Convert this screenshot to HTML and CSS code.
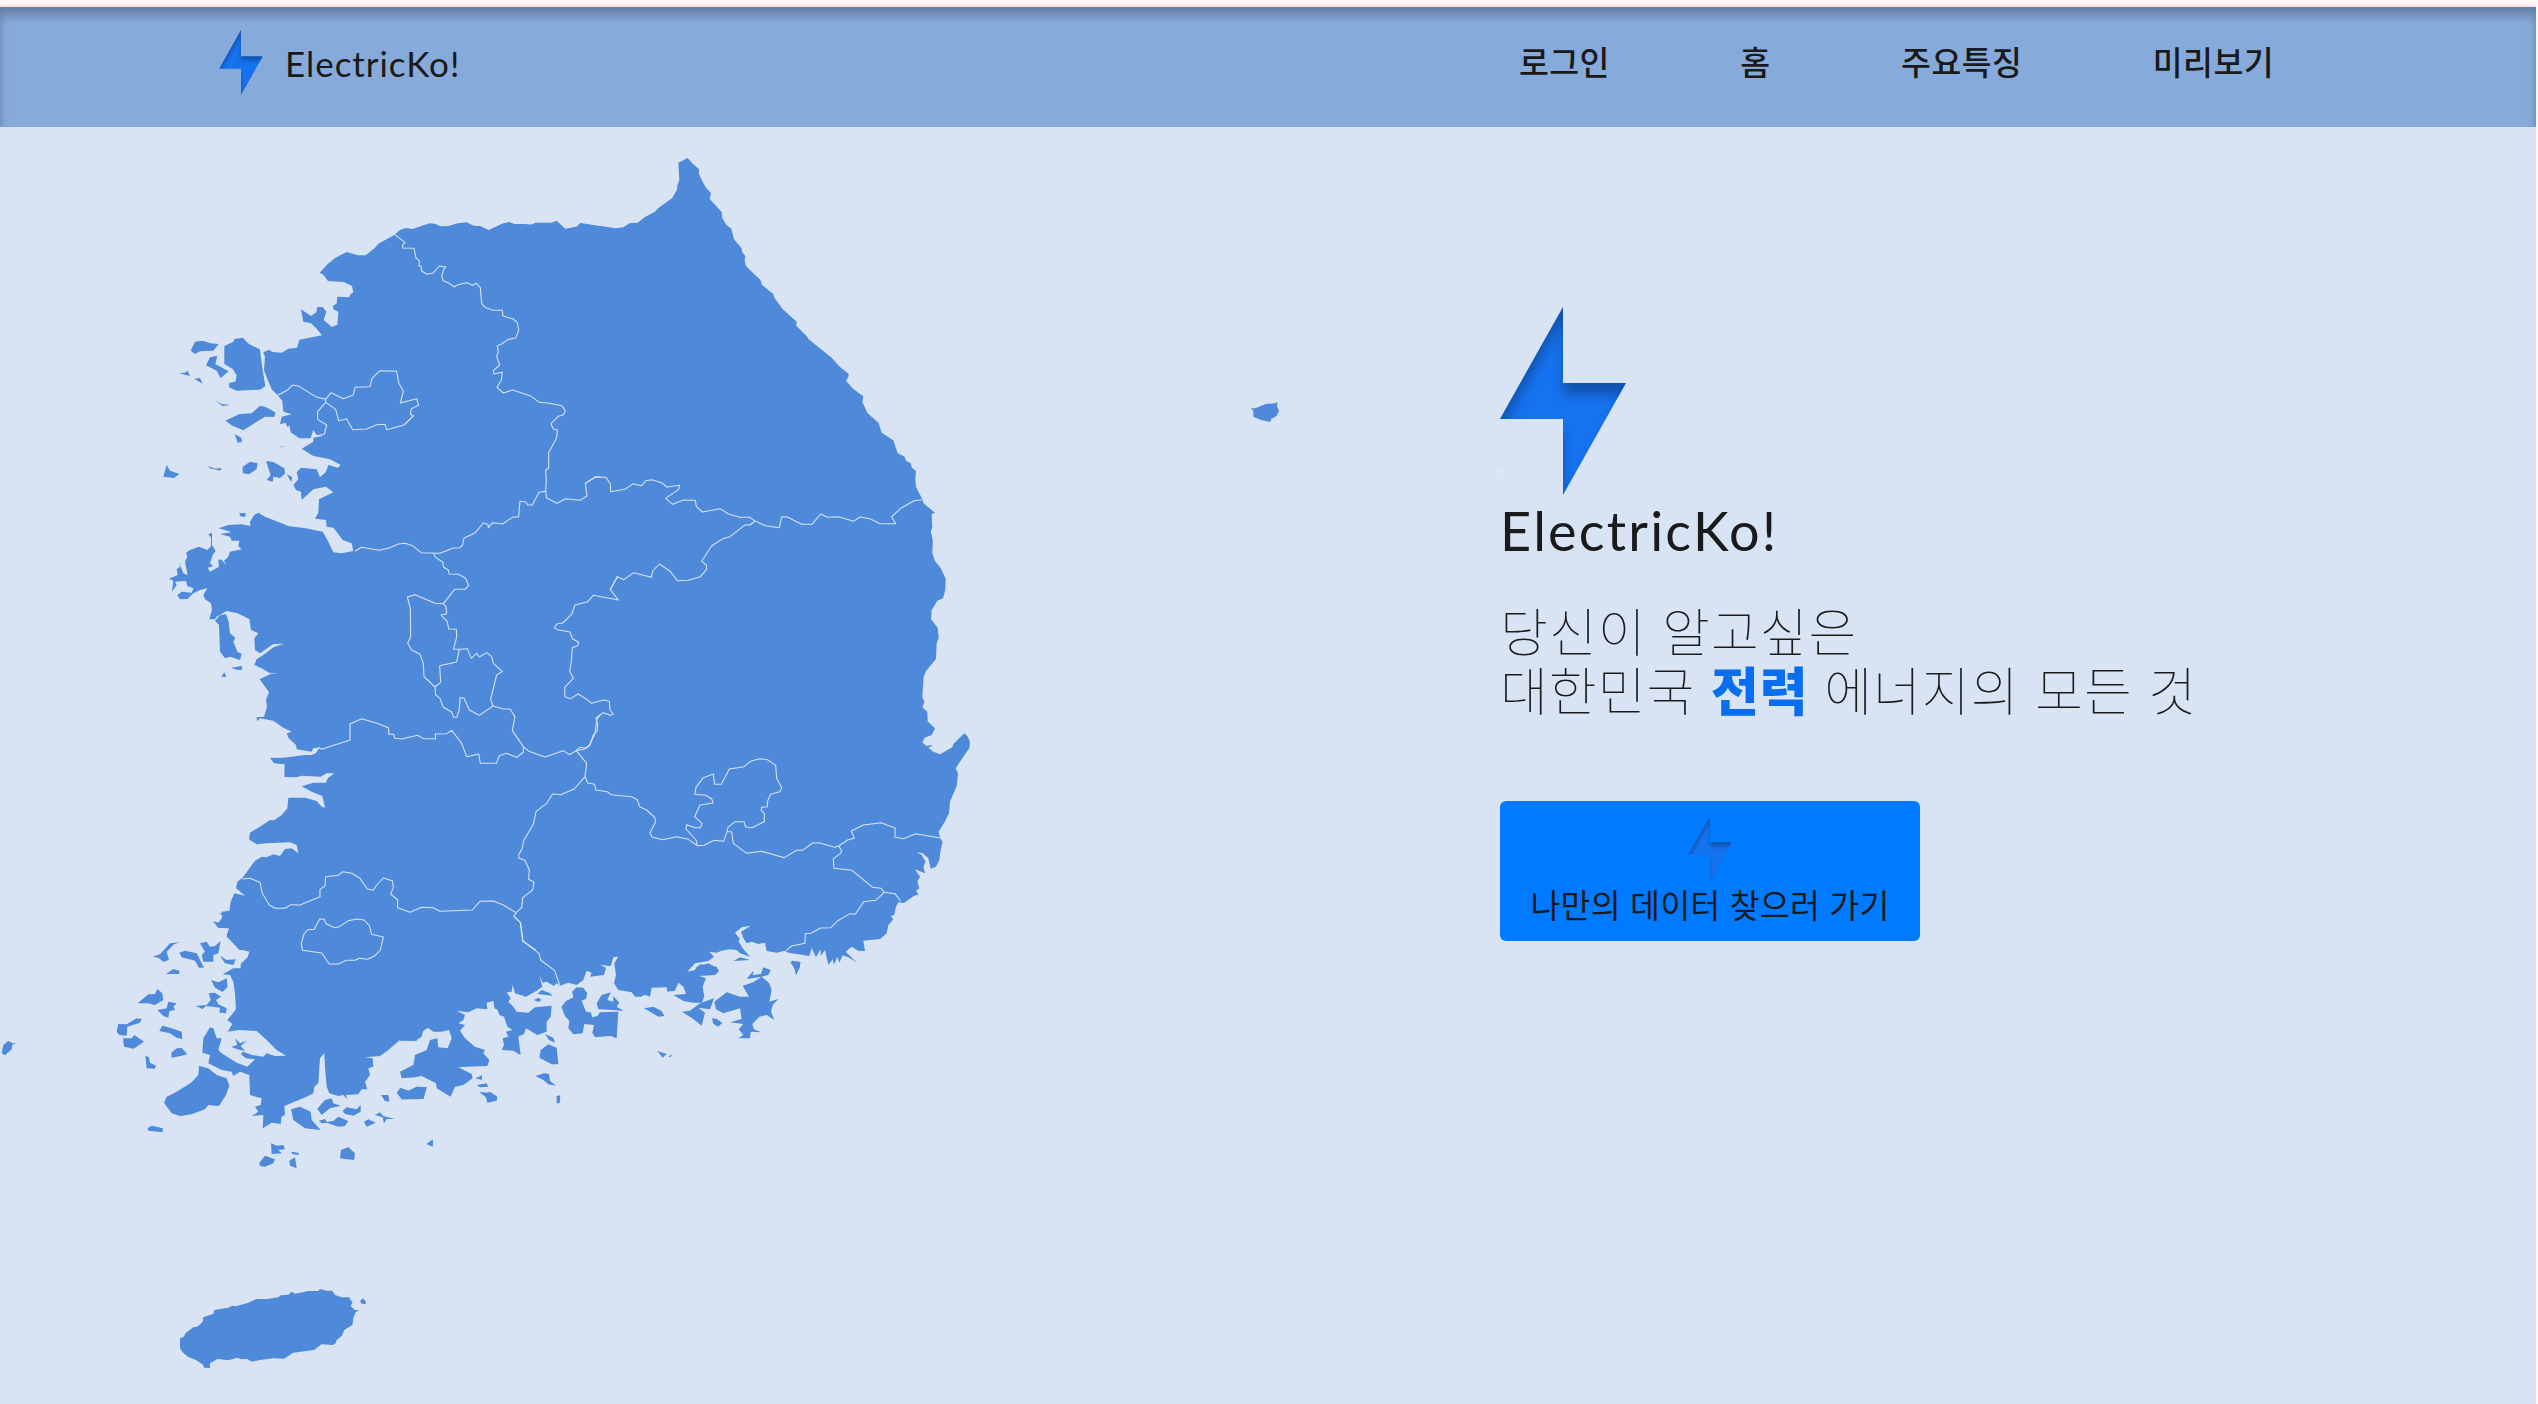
FILE: index.html
```html
<!DOCTYPE html>
<html lang="ko">
<head>
<meta charset="utf-8">
<title>ElectricKo!</title>
<link rel="stylesheet" href="styles.css">
</head>
<body>
<svg class="defs" width="0" height="0" aria-hidden="true">
  <defs>
    <filter id="inner" x="-10%" y="-10%" width="120%" height="120%" color-interpolation-filters="sRGB">
      <feOffset in="SourceAlpha" dx="0" dy="12" result="o"/>
      <feGaussianBlur in="o" stdDeviation="6" result="b"/>
      <feComposite in="SourceAlpha" in2="b" operator="out" result="s"/>
      <feFlood flood-color="#000" flood-opacity=".27"/>
      <feComposite in2="s" operator="in" result="shade"/>
      <feMerge><feMergeNode in="SourceGraphic"/><feMergeNode in="shade"/></feMerge>
    </filter>
    <symbol id="bolt" viewBox="0 0 126 188">
      <path d="M63 0V76H126L63 188V112H0Z" fill="#1673f0" filter="url(#inner)"/>
    </symbol>
  </defs>
</svg>
<header class="header">
  <a class="brand"><svg class="bolt-small"><use href="#bolt"/></svg><span class="brand-name">ElectricKo!</span></a>
  <nav class="nav"><a>로그인</a><a>홈</a><a>주요특징</a><a>미리보기</a></nav>
</header>
<main class="hero">
  <svg class="map" viewBox="0 127 1300 1277">
    <g class="land">
      <g transform="translate(100 140) scale(.33333)">
        <path d="M1500 258 1441 249 1430 260 1396 267 1370 243 1357 249 1307 248 1295 254 1274 252 1243 252 1229 247 1210 250 1166 270 1140 258 1121 257 1100 247 1073 250 1045 258 1021 259 1005 251 988 250 938 267 917 264 900 270 884 284 835 311 825 323 797 346 774 346 740 336 705 354 680 375 659 398 670 404 684 423 731 426 756 438 760 457 751 463 748 472 712 470 710 491 699 497 700 508 715 515 712 554 695 561 671 540 679 515 668 501 652 501 649 517 633 528 603 508 610 545 633 550 650 566 666 586 598 599 591 623 565 626 545 638 517 636 507 629 490 637 495 650 492 690 500 712 515 748 533 766 547 783 550 815 575 823 545 830 540 853 556 848 563 862 568 855 572 877 598 895 632 895 640 870 650 885 670 888 640 893 640 905 605 926 640 948 690 958 722 975 714 983 685 975 678 995 660 1012 650 988 603 983 590 997 595 1017 580 1035 588 1050 603 1055 605 1080 640 1048 678 1040 700 1057 657 1078 655 1118 645 1136 678 1140 680 1160 700 1163 715 1182 728 1200 755 1210 760 1234 760 1300H1500Z"/>
        <path d="M272 632 285 605 308 602 332 610 356 612 340 632 300 634 285 642ZM318 676 330 652 352 647 346 672 386 694 362 714 350 692ZM373 618 400 605 404 597 428 593 447 612 480 628 483 655 488 690 496 738 480 749 410 752 387 742 388 728 406 725 410 706 398 687 373 672ZM237 699 255 698 262 692 270 707 260 706ZM282 716 300 714 308 731ZM343 779 365 792 391 795 368 798ZM376 842 418 822 455 820 480 797 500 802 527 818 522 831 495 830 430 871 405 860 397 857ZM404 882 424 893 426 906 413 908ZM190 1010 200 975 210 992 238 1002 222 1014ZM323 978 346 986 365 984 360 992 330 985ZM428 980 450 965 473 970 470 987 447 1003 428 1000ZM498 963 520 966 553 985 556 1000 540 1014 520 1010 518 1025 500 1020 512 1006ZM560 1003 577 1012 574 1026ZM418 1120 437 1120 435 1130 422 1129ZM540 920 553 918 545 925Z"/>
      </g>
      <g transform="translate(500 140) scale(.33333)">
        <path d="M0 254 28 247 45 254 95 254 107 249 152 248 170 243 196 267 230 260 241 250 285 259 303 258 347 265 370 262 390 249 413 248 435 231 465 215 475 204 516 175 531 149 532 135 538 120 535 68 563 54 576 69 597 88 597 101 605 120 617 142 633 160 629 177 665 216 667 235 679 254 694 266 702 298 725 325 726 335 736 348 734 362 738 378 755 395 781 419 786 435 820 462 823 473 848 507 860 518 890 545 889 557 922 590 925 597 995 653 1020 681 1046 701 1045 711 1038 722 1060 747 1090 769 1087 787 1103 820 1136 849 1145 878 1180 901 1193 940 1214 950 1218 962 1232 970 1236 983 1248 993 1244 1040 1267 1077 1270 1090 1303 1118 1294 1122 1297 1160 1292 1175 1297 1200 1296 1240 1303 1262 1322 1285 1336 1318 1332 1350H0Z"/>
      </g>
      <g transform="translate(150 500) scale(.33333)">
        <path d="M610 153 575 160 550 157 535 125 518 95 463 84 418 79 385 66 345 50 325 38 313 45 300 65 301 78 275 73 235 75 206 85 225 90 245 97 210 102 240 110 245 122 268 122 265 138 275 148 240 155 235 170 222 182 228 195 213 178 205 180 207 200 180 215 173 203 190 198 180 190 188 165 197 152 186 135 186 98 175 103 183 112 183 138 172 150 147 140 120 150 108 158 112 170 105 185 113 225 100 220 86 185 90 200 80 208 83 225 57 236 70 242 66 275 80 255 75 245 108 243 112 258 130 265 125 278 95 275 82 285 90 298 112 297 130 280 150 270 172 265 160 285 165 298 183 310 186 330 178 358 195 358 200 350 230 333 262 340 298 357 303 390 325 400 313 415 315 450 330 460 370 432 402 431 370 442 340 465 320 478 313 495 335 505 360 520 383 521 360 523 329 538 357 577 348 600 351 620 342 650 320 652 321 664 330 655 370 662 400 683 425 695 410 700 416 715 438 735 440 748 485 755 490 744 508 743 497 760 485 765 465 765 400 773 360 774 372 790 404 793 403 831 440 832 455 827 512 830 530 820 553 820 533 835 528 848 490 848 455 859 485 875 517 888 525 923 515 920 500 903 465 893 415 893 412 925 395 945 372 961 360 960 330 980 300 998 297 1018 320 1033 350 1030 420 1027 440 1035 445 1060 425 1045 405 1047 390 1068 370 1063 350 1072 335 1070 315 1082 277 1134 262 1145 258 1165 285 1187 253 1180 242 1205 238 1235 210 1240 218 1250 208 1268 190 1265 205 1283 238 1285 230 1305 268 1350H1350V100H700Z"/>
        <path d="M195 362 210 346 228 342 236 365 240 400 256 413 250 425 262 455 275 462 270 480 240 470 225 475 210 455 207 375ZM268 38 286 41 285 50 272 48ZM244 503 275 498 277 509 262 510ZM214 530 223 517 229 531Z"/>
      </g>
      <g transform="translate(550 480) scale(.33333)">
        <path d="M1096 0 1098 20 1115 55 1120 70 1155 98 1144 102 1146 140 1142 155 1148 180 1147 220 1155 243 1172 265 1187 297 1186 330 1179 355 1162 362 1145 390 1143 418 1163 443 1166 475 1160 490 1158 537 1128 573 1121 592 1117 650 1123 665 1117 682 1132 695 1133 724 1155 745 1145 765 1124 773 1117 787 1128 797 1150 795 1135 803 1150 815 1170 823 1207 802 1210 792 1243 760 1252 768 1260 785 1258 805 1240 830 1217 865 1224 880 1221 915 1200 965 1197 1000 1186 1022 1166 1055 1170 1072 1178 1085 1172 1110 1168 1140 1158 1160 1142 1166 1135 1135 1118 1120 1100 1117 1115 1125 1127 1145 1120 1160 1125 1180 1095 1168 1110 1190 1102 1205 1108 1225 1098 1232 1106 1244 1092 1247 1062 1269 1045 1267 1037 1283 1033 1305 1022 1308 1030 1318 1015 1335 1010 1360 990 1377 940 1382 945 1413 925 1412 905 1400 887 1415 920 1447 895 1432 878 1426 868 1448 862 1430 852 1454 848 1438 835 1455 825 1410 812 1428 812 1408 798 1432 785 1404 778 1428 745 1423 715 1418 705 1412 680 1418 650 1413 645 1388 625 1392 605 1385 590 1390 580 1375 573 1355 603 1337 575 1342 555 1358 570 1378 565 1383 578 1405 600 1430 570 1420 560 1410 540 1408 515 1412 500 1418 478 1415 492 1430 475 1443 435 1450 412 1475 0 1340V0Z"/>
        <path d="M720 1445 752 1447 748 1463 738 1485 733 1465ZM550 1443 570 1432 600 1440Z"/>
      </g>
      <g transform="translate(400 820) scale(.33333)">
        <path d="M0 0H1000V340L870 430 862 455 885 450 890 440 925 430 945 440 958 452 945 465 898 468 918 475 908 500 913 530 905 548 880 548 850 543 820 525 858 522 850 500 835 488 825 512 802 515 800 502 755 503 750 530 735 524 722 530 705 530 695 517 655 510 642 490 648 465 643 430 655 410 640 412 632 438 600 435 618 443 612 465 570 470 575 458 560 452 550 480 530 495 505 488 480 497 470 490 462 498 440 485 428 488 418 465 427 500 410 512 378 530 345 520 338 495 335 515 320 517 332 535 325 545 340 560 350 575 385 578 405 562 455 557 452 590 440 605 440 635 412 645 378 625 372 642 355 650 362 705 340 692 305 690 312 675 308 655 325 650 318 635 337 630 322 620 312 590 298 585 293 570 283 565 280 543 260 548 262 568 230 565 205 577 170 572 195 585 190 600 175 610 195 615 180 632 195 655 225 680 255 690 250 700 268 720 262 738 200 740 175 742 215 762 218 775 190 795 165 800 152 830 110 805 108 790 65 768 45 772 5 775 0 755 40 735 45 705 80 690 90 660 112 655 115 682 143 685 155 655 147 630 125 635 100 635 82 622 65 638 50 662 0 662Z"/>
        <path d="M484 560 498 543 520 532 516 515 530 502 550 503 562 520 558 537 545 542 558 575 572 577 577 592 592 588 600 577 655 575 652 620 650 655 632 648 585 652 577 638 582 615 553 612 548 640 520 643 505 625 508 603 495 588ZM590 550 605 525 632 517 622 540 640 545 640 528 658 548 650 560 672 573 640 570 595 568ZM402 540 415 533 425 540 415 546ZM412 522 425 510 450 520 458 527ZM418 713 422 690 445 673 470 683 473 712 475 733 455 733ZM435 642 460 653 465 668 447 660ZM406 768 432 760 447 762 450 782 468 797 445 793 430 780ZM470 850 470 828 481 826 479 850ZM230 795 260 790 265 800 240 802ZM226 775 247 766 245 780ZM237 815 262 818 270 815 292 830 290 842 262 848 258 832ZM772 693 800 702 788 713ZM806 710 815 702 813 711ZM732 565 760 560 785 573 793 588 775 590 758 580ZM846 575 870 572 900 550 942 535 930 568 895 563 915 578 905 617 880 597ZM936 595 950 597 967 608 955 620 940 612ZM943 545 980 517 1020 530 1047 530 1028 497 1060 487 1085 470 1108 490 1115 510 1108 545 1135 537 1118 555 1113 575 1123 600 1100 585 1078 590 1057 612 1062 628 1083 637 1052 635 1050 655 1015 655 1030 645 1016 628 1030 612 990 607 1025 597 1020 565 970 580 948 568ZM1060 465 1083 462 1090 442 1112 450 1105 465 1085 470 1055 475ZM1040 477 1060 452 1058 475ZM1175 422 1200 425 1200 440 1188 465 1185 448ZM0 803 25 812 50 800 80 802 70 837 5 838ZM80 972 98 958 98 978ZM885 450 900 433 950 440 955 455 935 465 890 460Z"/>
      </g>
      <g transform="translate(0 820) scale(.33333)">
        <path d="M950 0V200L760 250 690 272 665 275 668 290 655 310 640 303 655 323 688 325 680 350 718 388 748 395 743 412 722 432 722 445 700 445 668 463 690 465 700 485 705 520 708 568 682 600 697 612 683 635 715 630 770 633 800 660 830 690 858 707 825 708 800 700 790 710 755 705 730 695 722 702 738 715 765 718 742 740 710 728 665 700 655 690 665 655 650 655 640 625 630 622 610 655 607 698 630 705 625 730 665 750 695 755 700 768 720 755 748 765 750 825 785 835 782 855 765 860 775 875 755 888 790 885 788 925 815 908 842 912 845 890 855 885 853 858 920 830 940 820 943 800 955 790 960 715 973 700 975 740 980 800 988 820 1015 828 1030 825 1042 838 1038 825 1075 823 1085 808 1102 808 1095 785 1110 765 1105 745 1120 740 1118 715 1095 712 1140 708 1165 690 1200 660 1245 662 1265 650 1270 630 1290 622 1350 500V0Z"/>
        <path d="M458 410 480 403 510 370 540 367 522 373 500 395 507 420 490 425 475 413ZM538 398 555 392 590 400 612 443 597 443 585 422 545 412ZM600 370 620 365 630 380 645 378 662 363 655 400 640 405 640 425 610 425 605 405 615 395ZM660 407 680 420 707 418 700 435 675 430ZM498 462 520 447 538 452 538 462ZM633 480 655 487 680 475 683 500 668 516 645 503ZM626 520 645 518 663 530 648 540 655 553 680 565 678 580 658 578 660 563 618 558 608 567 587 558 620 555 632 540ZM413 550 445 523 465 522 472 507 487 520 490 540 465 555 445 550ZM472 570 500 565 505 545 530 550 520 560 525 570 508 573 505 593 490 588ZM350 635 355 612 380 613 410 595 425 597 420 608 382 620 380 647 358 645ZM369 655 395 655 403 645 432 665 410 680 400 686 372 680ZM478 633 487 617 515 625 545 635 547 657 530 653 510 640ZM514 698 530 685 545 684 562 703 545 707 515 713ZM436 707 447 712 450 728 468 737 465 746 440 745ZM5 700 10 675 25 663 38 670 53 668 38 673 35 688 15 706ZM492 848 500 830 530 815 575 787 595 765 597 738 625 745 650 765 680 775 688 797 678 825 657 858 625 855 615 868 575 883 540 888 515 880ZM442 925 455 917 488 925 488 937 445 932ZM694 680 712 675 705 655 720 670 740 662 722 678 735 693 712 688ZM873 868 900 860 932 875 935 900 962 930 915 925 880 900ZM952 866 975 840 995 835 1000 850 1022 857 990 865 965 885ZM1028 872 1040 862 1070 868 1082 855 1082 875 1060 887 1035 882ZM975 907 1000 903 1015 890 1045 903 1035 918 1015 920ZM957 902 975 897 982 908 965 910ZM1092 905 1105 898 1127 908 1100 920ZM1125 885 1140 877 1150 888 1185 897 1160 897 1152 910 1148 892ZM1143 825 1165 825 1168 845 1155 843ZM1190 818 1200 805 1225 812 1255 800 1280 802 1270 837 1205 838ZM1280 972 1298 960 1298 980ZM1020 1015 1023 990 1045 982 1065 1000 1062 1020 1035 1017ZM813 970 830 977 850 975 855 988 835 990 845 1000 815 1002ZM778 1028 795 1007 825 1018 820 1030 795 1040 780 1038ZM873 995 895 998 897 1005 878 1003ZM868 1022 885 1012 890 1045 870 1037Z"/>
      </g>
      <path transform="translate(160 1270) scale(.33333)" d="M60 205 72 200 76 190 100 172 112 170 128 155 130 142 160 131 163 120 205 113 217 107 228 109 265 98 290 87 322 87 355 82 362 76 385 74 395 65 405 71 445 63 475 63 480 57 500 62 517 62 525 75 545 82 568 82 572 90 578 97 572 108 585 120 598 121 587 127 580 145 577 165 553 180 545 198 530 210 527 220 518 225 485 223 462 240 400 248 372 266 340 265 300 270 275 275 262 267 245 268 232 263 205 271 173 267 150 280 150 294 132 293 130 285 108 270 85 261 68 247 60 235ZM600 93 609 85 618 95 617 102 605 101Z"/>
      <path transform="translate(1230 380) scale(.33333)" d="M63 85 75 85 108 72 134 70 143 67 141 78 147 92 140 108 125 116 120 126 95 121 70 110 70 93Z"/>
    </g>
    <g class="border">
      <path transform="translate(100 140) scale(.33333)" d="M884 284 916 308 908 314 908 324 942 325 948 354 958 362 957 378 963 378 965 393 980 402 998 400 1018 378 1038 381 1032 385 1025 410 1030 422 1048 430 1063 441 1073 434 1100 428 1118 436 1129 430 1141 443 1145 490 1155 502 1178 511 1207 511 1209 528 1240 537 1252 548 1256 570 1248 593 1223 599 1205 612 1192 617 1195 635 1190 650 1199 675 1180 692 1182 702 1207 697 1204 720 1191 742 1210 759 1238 750 1290 767 1318 787 1345 789 1386 797 1396 813 1390 825 1375 829 1353 851 1360 867 1372 870 1370 893 1346 938 1346 984 1337 990 1339 1020 1337 1054 1317 1057 1297 1095 1283 1095 1277 1086 1260 1084 1256 1130 1237 1132 1208 1152 1178 1148 1165 1163 1164 1153 1150 1149 1125 1179 1092 1194 1088 1215 1080 1223 1060 1224 1020 1240 963 1238 938 1217 915 1210 895 1212 870 1223 838 1231 785 1222 765 1234M1337 1054 1340 1074 1371 1090 1397 1076 1440 1081 1461 1068 1456 1030 1486 1011 1500 1010M533 766 564 749 578 735 597 739 647 770 677 778 693 758 730 776 760 765 765 742 810 740 816 715 840 692 890 694 896 728 910 754 901 789 950 776 956 796 934 806 931 822 940 828 912 855 860 869 855 853 830 854 800 867 758 869 740 837 716 842 707 808 677 787 653 815 653 838 680 855 673 882 648 888M677 778 677 787M1001 1241 1008 1253 1028 1266 1031 1282 1045 1290 1047 1302 1075 1303 1097 1315 1106 1337 1095 1348 1064 1348M600 897 575 922 545 921 530 930M607 931 552 945 525 962M545 785 520 791 500 804"/>
      <path transform="translate(500 140) scale(.33333)" d="M256 1030 286 1011 318 1012 331 1032 332 1055 375 1048 399 1031 425 1037 438 1022 456 1019 488 1030 500 1041 539 1036 536 1048 497 1075 518 1093 550 1080 586 1081 589 1099 607 1116 660 1106 685 1122 720 1132 749 1132 765 1143 796 1157 838 1163 845 1130 862 1131 905 1153 936 1153 962 1122 982 1132 1015 1130 1061 1144 1080 1131 1110 1136 1140 1151 1187 1151 1175 1130 1205 1103 1242 1082 1267 1079M765 1143 750 1155 736 1154 690 1190 668 1196 635 1218 605 1264 619 1275 620 1288 601 1310 565 1321 532 1322 510 1293 478 1272 458 1293 454 1312 401 1298 372 1319 352 1310 330 1350"/>
      <path transform="translate(150 500) scale(.33333)" d="M914 268 880 311 855 310 818 294 795 284 772 291 781 325 782 410 773 430 785 450 810 463 820 490 822 530 855 561 872 547 869 497 920 486 928 448 910 448 920 412 919 388 896 387 892 365 873 345 890 341 888 320 880 311M928 448 952 446 964 475 980 460 988 471 1010 458 1025 470 1030 490 1057 515 1040 525 1022 597 1029 618 988 646 958 630 942 594 930 593 928 630 920 652 911 652 905 636 880 622 870 595 857 585 855 561M1029 618 1060 627 1080 627 1095 650 1087 692 1120 740 1120 756 1100 772 1070 760 1048 767 1039 790 991 790 986 762 950 770 935 730 905 691 890 701 856 702 857 716 820 716 803 706 755 717 735 715 731 703 717 703 715 683 686 671 635 656 600 672 600 720 515 748 505 742M1120 740 1137 754 1185 771 1240 752 1258 764 1279 752 1303 747 1318 738 1335 700 1340 660 1350 644M1279 752 1310 790 1305 830 1273 867 1232 884 1208 882 1190 910 1158 935 1150 973 1122 1020 1116 1047 1106 1065 1107 1075 1125 1081 1138 1110 1136 1138 1152 1147 1148 1170 1118 1193 1115 1223 1098 1238 1060 1215 1030 1203 990 1204 967 1230 870 1234 850 1223 815 1222 780 1237 743 1223 743 1200 722 1182 730 1163 727 1142 700 1134 680 1155 670 1171 652 1167 630 1135 605 1120 578 1115 565 1126 527 1130 525 1158 510 1168 510 1190 450 1215 423 1214 405 1225 375 1225 358 1215 337 1180 330 1147 300 1135 277 1137M1098 1238 1092 1248 1111 1268 1118 1323 1157 1350"/>
      <path transform="translate(550 480) scale(.33333)" d="M202 290 181 329 205 360 130 346 113 365 75 375 65 403 38 429 20 432 13 443 22 449 60 456 68 477 86 487 83 497 67 503 64 545 59 573 70 595 44 622 45 650 62 656 84 642 107 656 125 670 160 660 178 664 180 690 190 702 181 706 160 698 138 714 143 733 142 753 130 765 120 793 106 805 90 802 78 812M105 890 113 909 134 913 137 930 172 935 183 944 245 950 262 960 269 980 290 990 315 1013 316 1027 300 1058 306 1071 338 1079 380 1070 415 1078 442 1097 462 1096 493 1081 521 1084 531 1055 545 1055 550 1090 590 1120 635 1114 703 1133 740 1111 757 1111 788 1089 810 1089 854 1102 866 1098 875 1112 872 1120 850 1136 852 1165 906 1171 968 1222 993 1225 1003 1237 1035 1241 1052 1263M442 1097 438 1080 408 1047 410 1034 435 1043 452 1043 456 1030 434 1010 450 975 489 969 485 956 467 946 434 943 438 922 460 893 490 882 494 913 514 913 538 867 582 860 603 843 630 836 652 839 677 856 680 895 695 923 690 935 662 943 653 962 652 980 635 982 634 992 643 1000 643 1025 606 1043 587 1041 582 1025 555 1025 534 1042 531 1055M866 1098 893 1080 913 1075 904 1053 940 1035 993 1028 1035 1044 1035 1071 1060 1076 1097 1061 1140 1069 1175 1075M1003 1237 977 1261 941 1265 916 1303 900 1301 862 1323 843 1343 812 1344 782 1360 766 1361 765 1390 725 1398 708 1412"/>
      <path transform="translate(0 820) scale(.33333)" d="M907 391 904 370 912 342 923 329 943 328 959 297 973 298 978 311 1003 323 1018 320 1045 302 1070 297 1092 300 1108 317 1115 343 1150 351 1141 390 1125 407 1103 418 1078 415 1065 421 1040 421 1015 432 988 432 965 399ZM1542 290 1562 308 1569 363 1617 400 1622 420 1664 452 1679 495"/>
    </g>
  </svg>
  <section class="intro">
    <svg class="bolt-large" viewBox="0 0 126 188"><use href="#bolt" width="126" height="188"/><path d="M-2 162l2 3-1 2z" fill="#f2faf4"/></svg>
    <h1 class="title">ElectricKo!</h1>
    <p class="lead">당신이 알고싶은<br>대한민국 <strong>전력</strong> 에너지의 모든 것</p>
    <a class="cta"><svg class="bolt-small"><use href="#bolt"/></svg><span>나만의 데이터 찾으러 가기</span></a>
  </section>
</main>
</body>
</html>
```
FILE: styles.css
```css
* { box-sizing: border-box; }
html { background: #fff6f5; }
body {
  margin: 0;
  width: 2536px;
  height: 1404px;
  overflow: hidden;
  display: flex;
  flex-direction: column;
  border-top: 5px solid #fff6f5;
  background: #d8e4f4;
  color: #1a1a1a;
  font-family: Lato, "Noto Sans CJK KR", sans-serif;
}
.defs { position: absolute; }
.header {
  flex: none;
  height: 122px;
  border-top: 2px solid #f9dedf;
  padding: 0 262px 0 219px;
  display: flex;
  justify-content: space-between;
  align-items: flex-start;
  background: #86aada;
  box-shadow: inset 0 8px 10px rgba(0, 0, 0, .25);
}
.brand { display: flex; padding-top: 23px; }
.bolt-small { display: block; width: 44px; height: 65px; }
.brand-name {
  margin: 12px 0 0 22px;
  font-size: 35px;
  line-height: 42px;
  letter-spacing: .95px;
}
.nav {
  display: flex;
  gap: 130.5px;
  padding-top: 31px;
  font-family: "Noto Sans CJK KR", sans-serif;
  font-size: 32.5px;
  font-weight: 500;
  line-height: 46px;
  letter-spacing: .4px;
}
.hero { flex: 1; display: grid; grid-template-columns: 1500px 1fr; }
.map { display: block; width: 1300px; height: 1277px; }
.land { fill: #4e8ad9; }
.border { fill: none; stroke: #d8e4f4; stroke-width: 3.2; stroke-linejoin: round; }
.intro { padding-top: 180px; display: flex; flex-direction: column; align-items: flex-start; }
.bolt-large { display: block; width: 126px; height: 188px; overflow: visible; }
.title {
  margin: 4px 0 0;
  font-size: 54px;
  font-weight: 400;
  line-height: 64px;
  letter-spacing: 2.2px;
}
.lead {
  margin: 37px 0 0;
  font-family: "Noto Sans CJK KR", sans-serif;
  font-size: 52px;
  font-weight: 100;
  line-height: 59px;
  letter-spacing: 1px;
  white-space: nowrap;
}
.lead strong { font-weight: 900; color: #096df0; }
.cta {
  margin-top: 83px;
  width: 420px;
  height: 140px;
  padding-top: 15px;
  border-radius: 6px;
  display: flex;
  flex-direction: column;
  align-items: center;
  background: #007bff;
  font-family: "Noto Sans CJK KR", sans-serif;
  font-size: 32.5px;
  line-height: 46px;
  letter-spacing: .2px;
}
```
